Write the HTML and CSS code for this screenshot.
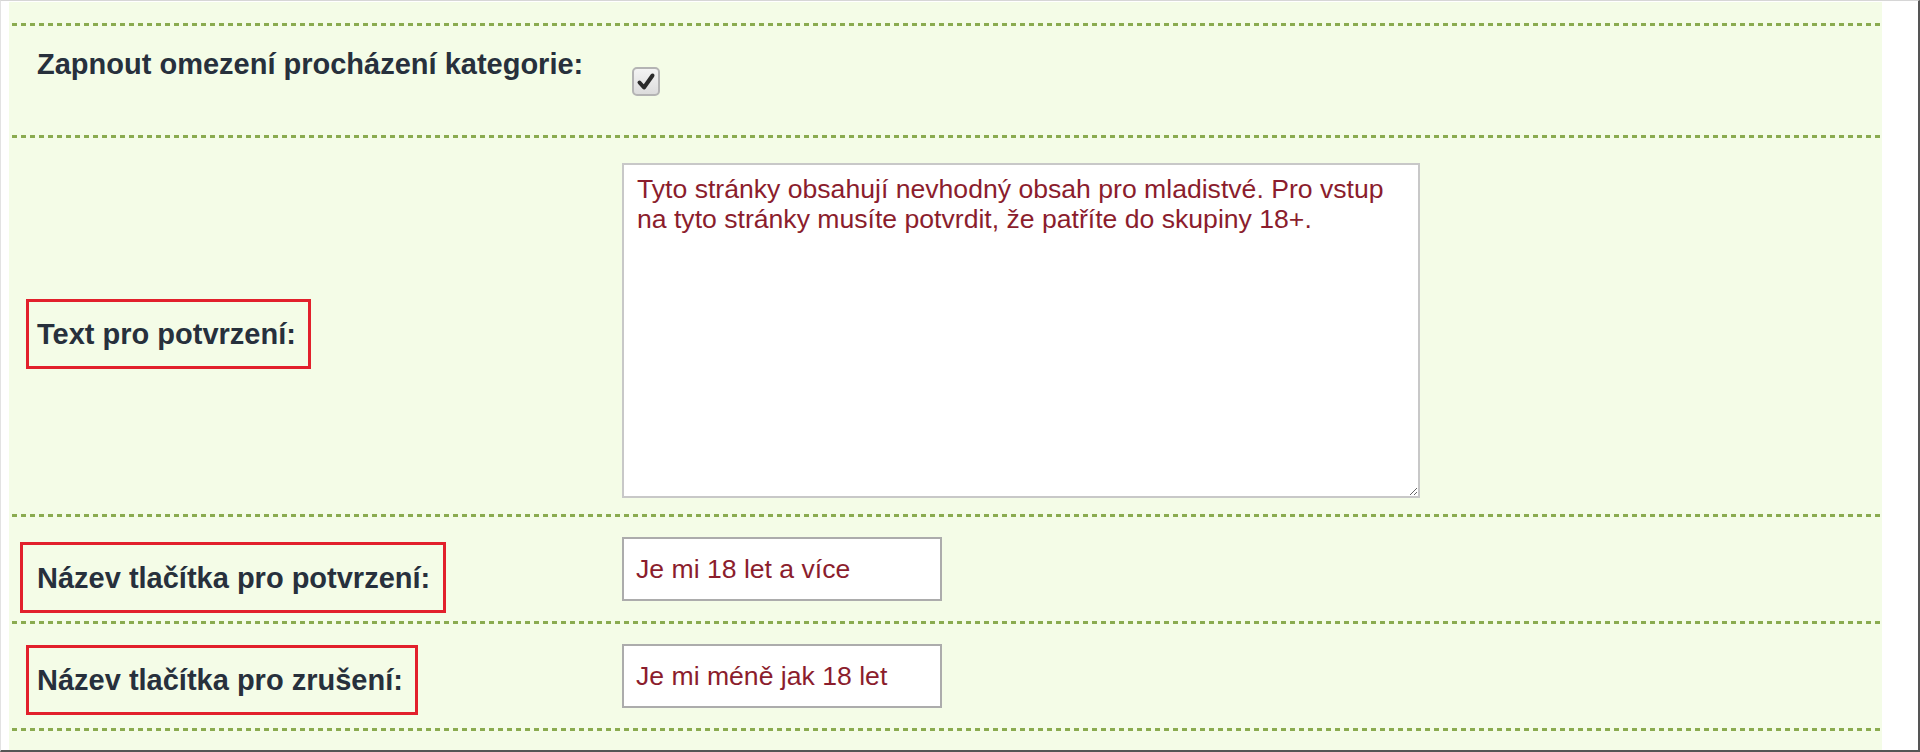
FILE: index.html
```html
<!DOCTYPE html>
<html lang="cs">
<head>
    <meta charset="UTF-8">
    <meta name="viewport" content="width=device-width, initial-scale=1.0">
    <title>Omezení procházení kategorie</title>
    <link rel="stylesheet" href="styles.css">
</head>
<body>
    <div class="screen">
        <div class="panel">
            <div class="row row-stub"></div>

            <div class="row row-check">
                <div class="label label-top">Zapnout omezení procházení kategorie:</div>
                <div class="field">
                    <span class="checkbox">
                        <svg width="24" height="24" viewBox="0 0 24 24">
                            <path d="M5.5 12.5 L10 17.5 L18.5 5.5" fill="none" stroke="#2b2b2b" stroke-width="4" stroke-linecap="round" stroke-linejoin="round"/>
                        </svg>
                    </span>
                </div>
            </div>

            <div class="row row-text">
                <div class="label label-text"><span class="mark">Text pro potvrzení:</span></div>
                <div class="field">
                    <textarea class="confirm-text">Tyto stránky obsahují nevhodný obsah pro mladistvé. Pro vstup na tyto stránky musíte potvrdit, že patříte do skupiny 18+.</textarea>
                </div>
            </div>

            <div class="row row-input">
                <div class="label label-confirm"><span class="mark mark-wide">Název tlačítka pro potvrzení:</span></div>
                <div class="field">
                    <input type="text" class="text-input" value="Je mi 18 let a více">
                </div>
            </div>

            <div class="row row-input">
                <div class="label label-cancel"><span class="mark">Název tlačítka pro zrušení:</span></div>
                <div class="field">
                    <input type="text" class="text-input" value="Je mi méně jak 18 let">
                </div>
            </div>
        </div>
    </div>
</body>
</html>
```

FILE: styles.css
```css
body {
    margin: 0;
    background-color: #ffffff;
    font-family: "Liberation Sans", Arial, sans-serif;
}

.screen {
    box-sizing: border-box;
    width: 1920px;
    height: 752px;
    display: flex;
    padding: 1px 0 0 8px;
    border-top: 1px solid #d6d6d6;
    border-left: 1px solid #e2e2e2;
    border-right: 2px solid #555555;
    border-bottom: 2px solid #555555;
}

.panel {
    width: 1873px;
    background-color: #f4fce7; /* light green */
    display: flex;
    flex-direction: column;
}

/* dashed divider under every row */
.row {
    box-sizing: border-box;
    flex-shrink: 0;
    display: grid;
    grid-template-columns: 613px 1fr;
    align-items: center;
    padding-bottom: 3px;
    background-image: repeating-linear-gradient(to right, #8aab50 0 5px, transparent 5px 9px);
    background-size: calc(100% - 5px) 3px;
    background-position: 3px bottom;
    background-repeat: no-repeat;
}

.row-stub {
    display: block;
    height: 24px;
}

.row-check {
    height: 112px;
}

.row-text {
    height: 379px;
    padding-top: 9px;
}

.row-input {
    height: 107px;
}

.label {
    padding-left: 28px;
    font-size: 29px;
    line-height: 34px;
    font-weight: bold;
    color: #27303c;
    white-space: nowrap;
}

.label-top {
    align-self: start;
    padding-top: 21px;
}

.label-text {
    padding-top: 7px;
}

.label-confirm {
    padding-top: 17px;
}

.label-cancel {
    padding-top: 7px;
}

/* red highlight frame round a label */
.mark {
    display: inline-block;
    margin-left: -11px;
    padding: 15px 12px 15px 8px;
    border: 3px solid #e2202c;
}

.mark-wide {
    margin-left: -17px;
    padding: 16px 13px 15px 14px;
}

.field {
    display: flex;
    align-items: center;
}

.checkbox {
    box-sizing: border-box;
    width: 28px;
    height: 29px;
    margin-left: 10px;
    margin-top: 2px;
    display: flex;
    align-items: center;
    justify-content: center;
    border: 2px solid #b4b4b4;
    border-radius: 5px;
    background: linear-gradient(#f4f4f4, #dcdcdc);
}

.confirm-text {
    box-sizing: border-box;
    width: 798px;
    height: 335px;
    padding: 9px 13px;
    border: 2px solid #c8c8c8;
    background-color: #ffffff;
    font-family: "Liberation Sans", Arial, sans-serif;
    font-size: 26.6px;
    line-height: 30px;
    color: #8b1d2d;
    outline: none;
}

.text-input {
    box-sizing: border-box;
    width: 320px;
    height: 64px;
    padding: 0 12px;
    border: 2px solid #acacac;
    background-color: #ffffff;
    font-family: "Liberation Sans", Arial, sans-serif;
    font-size: 26.6px;
    color: #8b1d2d;
    outline: none;
}
```
